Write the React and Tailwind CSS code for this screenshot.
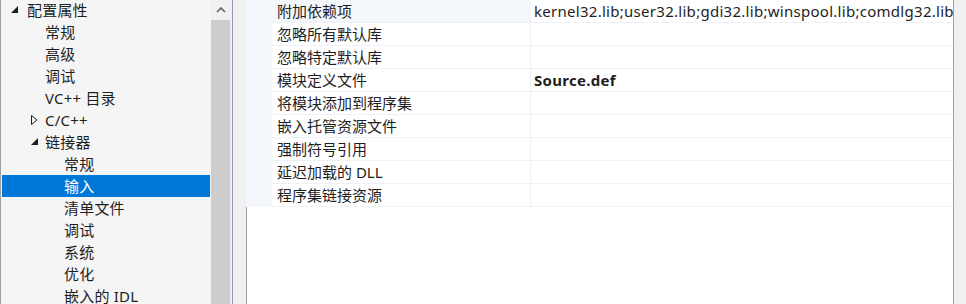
import React from "react";

const tree = [
  { label: "配置属性", level: 0, arrow: "open" },
  { label: "常规", level: 1 },
  { label: "高级", level: 1 },
  { label: "调试", level: 1 },
  { label: "VC++ 目录", level: 1 },
  { label: "C/C++", level: 1, arrow: "closed" },
  { label: "链接器", level: 1, arrow: "open" },
  { label: "常规", level: 2 },
  { label: "输入", level: 2, selected: true },
  { label: "清单文件", level: 2 },
  { label: "调试", level: 2 },
  { label: "系统", level: 2 },
  { label: "优化", level: 2 },
  { label: "嵌入的 IDL", level: 2 },
];

const rows = [
  { name: "附加依赖项", value: "kernel32.lib;user32.lib;gdi32.lib;winspool.lib;comdlg32.lib", focus: true },
  { name: "忽略所有默认库", value: "" },
  { name: "忽略特定默认库", value: "" },
  { name: "模块定义文件", value: "Source.def", bold: true },
  { name: "将模块添加到程序集", value: "" },
  { name: "嵌入托管资源文件", value: "" },
  { name: "强制符号引用", value: "" },
  { name: "延迟加载的 DLL", value: "" },
  { name: "程序集链接资源", value: "" },
];

const font = { fontFamily: '"Noto Sans", "Noto Sans CJK SC", sans-serif' };

function OpenArrow() {
  return (
    <svg width="8" height="8" viewBox="0 0 8 8" className="shrink-0">
      <polygon points="7,0 7,7 0,7" fill="#1e1e1e" />
    </svg>
  );
}

function ClosedArrow() {
  return (
    <svg width="7" height="10" viewBox="0 0 7 10" className="shrink-0">
      <polygon points="0.5,0.5 6,5 0.5,9.5" fill="none" stroke="#1e1e1e" strokeWidth="1" />
    </svg>
  );
}

export default function App() {
  return (
    <div
      className="w-[966px] h-[304px] flex overflow-hidden bg-[#f0f0f0] text-[15px] text-[#1e1e1e]"
      style={font}
    >
      {/* tree */}
      <div className="w-[211px] shrink-0 border-l border-[#a0a0a0] pl-px pr-px bg-[#f5f5f5] flex flex-col -mt-px">
        {tree.map((t, i) => (
          <div
            key={i}
            className={`h-[22px] shrink-0 flex items-center leading-[22px] whitespace-nowrap ${
              t.selected ? "bg-[#0078d7] text-white" : ""
            }`}
          >
            {t.level === 0 && (
              <div className="w-[25px] pl-[9px] flex items-center">
                <OpenArrow />
              </div>
            )}
            {t.level === 1 && (
              <div className="w-[43px] pl-[29px] flex items-center">
                {t.arrow === "open" && <OpenArrow />}
                {t.arrow === "closed" && <ClosedArrow />}
              </div>
            )}
            {t.level === 2 && <div className="w-[62px]" />}
            <span className="tracking-[0.2px]">{t.label}</span>
          </div>
        ))}
      </div>

      {/* scrollbar */}
      <div className="w-[19px] shrink-0 flex flex-col">
        <div className="h-[20px] bg-[#f0f0f0] flex items-center justify-center">
          <svg width="10" height="6" viewBox="0 0 10 6">
            <polyline points="1,5 5,1 9,5" fill="none" stroke="#606060" strokeWidth="1.6" />
          </svg>
        </div>
        <div className="flex-1 bg-[#cdcdcd]" />
      </div>

      <div className="w-[2px] shrink-0 bg-[#f0f0f0]" />
      <div className="w-px shrink-0 bg-[#9896ad]" />
      <div className="w-[13px] shrink-0 bg-[#f0f0f0]" />

      {/* property grid */}
      <div className="w-[707px] shrink-0 flex flex-col">
        <div className="flex flex-col">
          {rows.map((r, i) => (
            <div key={i} className="h-[23px] flex">
              <div className="w-[26px] shrink-0 bg-[#f3f6fb]" />
              <div
                className={`w-[258px] shrink-0 pl-[5px] leading-[22px] border-b border-[#eef1f6] whitespace-nowrap ${
                  r.focus ? "bg-[#f3f6fb]" : "bg-white"
                }`}
              >
                {r.name}
              </div>
              <div className="w-px shrink-0 bg-[#eef1f6]" />
              <div
                className={`flex-1 min-w-0 overflow-hidden pl-[3px] leading-[22px] bg-white border-b border-[#eef1f6] whitespace-nowrap tracking-[0.28px] ${
                  r.bold ? "font-bold" : ""
                }`}
              >
                {r.value}
              </div>
            </div>
          ))}
        </div>
        <div className="flex-1 bg-white border-l border-[#a0a0a0]" />
      </div>

      <div className="w-px shrink-0 bg-[#a0a0a0]" />
      <div className="flex-1 bg-[#f0f0f0]" />
    </div>
  );
}
